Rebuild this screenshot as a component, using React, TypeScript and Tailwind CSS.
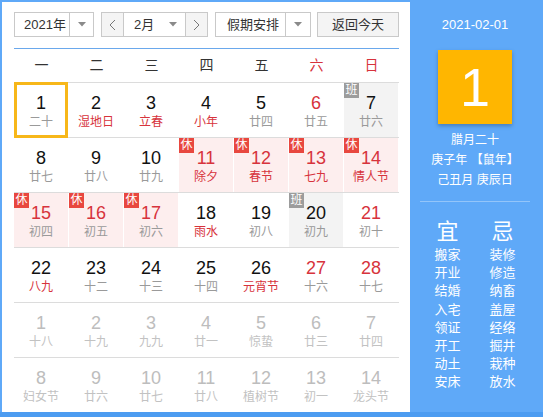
import React from "react";

type Day = {
  d: number;
  l: string;
  red?: boolean;
  lred?: boolean;
  tag?: "休" | "班";
  other?: boolean;
  today?: boolean;
};

const rows: Day[][] = [
  [
    { d: 1, l: "二十", today: true },
    { d: 2, l: "湿地日", lred: true },
    { d: 3, l: "立春", lred: true },
    { d: 4, l: "小年", lred: true },
    { d: 5, l: "廿四" },
    { d: 6, l: "廿五", red: true },
    { d: 7, l: "廿六", tag: "班" },
  ],
  [
    { d: 8, l: "廿七" },
    { d: 9, l: "廿八" },
    { d: 10, l: "廿九" },
    { d: 11, l: "除夕", red: true, lred: true, tag: "休" },
    { d: 12, l: "春节", red: true, lred: true, tag: "休" },
    { d: 13, l: "七九", red: true, lred: true, tag: "休" },
    { d: 14, l: "情人节", red: true, lred: true, tag: "休" },
  ],
  [
    { d: 15, l: "初四", red: true, tag: "休" },
    { d: 16, l: "初五", red: true, tag: "休" },
    { d: 17, l: "初六", red: true, tag: "休" },
    { d: 18, l: "雨水", lred: true },
    { d: 19, l: "初八" },
    { d: 20, l: "初九", tag: "班" },
    { d: 21, l: "初十", red: true },
  ],
  [
    { d: 22, l: "八九", lred: true },
    { d: 23, l: "十二" },
    { d: 24, l: "十三" },
    { d: 25, l: "十四" },
    { d: 26, l: "元宵节", lred: true },
    { d: 27, l: "十六", red: true },
    { d: 28, l: "十七", red: true },
  ],
  [
    { d: 1, l: "十八", other: true },
    { d: 2, l: "十九", other: true },
    { d: 3, l: "九九", other: true },
    { d: 4, l: "廿一", other: true },
    { d: 5, l: "惊蛰", other: true },
    { d: 6, l: "廿三", other: true },
    { d: 7, l: "廿四", other: true },
  ],
  [
    { d: 8, l: "妇女节", other: true },
    { d: 9, l: "廿六", other: true },
    { d: 10, l: "廿七", other: true },
    { d: 11, l: "廿八", other: true },
    { d: 12, l: "植树节", other: true },
    { d: 13, l: "初一", other: true },
    { d: 14, l: "龙头节", other: true },
  ],
];

const yi = ["搬家", "开业", "结婚", "入宅", "领证", "开工", "动土", "安床"];
const ji = ["装修", "修造", "纳畜", "盖屋", "经络", "掘井", "栽种", "放水"];

function Caret() {
  return (
    <svg width="8" height="5" viewBox="0 0 8 5">
      <path d="M0 0 L8 0 L4 4.5 Z" fill="#8a8a8a" />
    </svg>
  );
}

function Chevron({ dir }: { dir: "l" | "r" }) {
  return (
    <svg width="7" height="12" viewBox="0 0 7 12">
      <polyline
        points={dir === "l" ? "6,1 1,6 6,11" : "1,1 6,6 1,11"}
        fill="none"
        stroke="#777"
        strokeWidth="1"
      />
    </svg>
  );
}

function Cell({ day }: { day: Day }) {
  const bg =
    day.tag === "休" ? "bg-[#fdeeee]" : day.tag === "班" ? "bg-[#f3f3f3]" : "bg-white";
  const num = day.other ? "text-[#bdbdbd]" : day.red ? "text-[#d7333c]" : "text-[#111]";
  const lun = day.other ? "text-[#c2c2c2]" : day.lred ? "text-[#d7333c]" : "text-[#9a9a9a]";
  return (
    <div className={`relative flex h-[54px] flex-col items-center border-r border-white pt-[10px] ${bg}`}>
      {day.tag && (
        <span
          className={`absolute left-0 top-0 h-[15px] w-[15px] text-center text-[12px] leading-[15px] text-white ${
            day.tag === "休" ? "bg-[#e8473f]" : "bg-[#9c9c9c]"
          }`}
        >
          {day.tag}
        </span>
      )}
      <span className={`text-[18px] leading-[20px] ${num}`}>{day.d}</span>
      <span className={`mt-[1px] text-[12px] leading-[16px] ${lun}`}>{day.l}</span>
      {day.today && (
        <span className="absolute -bottom-[1px] -top-[1px] left-0 right-0 z-10 border-[3px] border-[#f7b719]" />
      )}
    </div>
  );
}

export default function App() {
  return (
    <div className="flex h-[417px] w-[543px] border-b-[5px] border-[#4c9cf1] bg-[#5fa9f8] pl-[2px] pt-[2px] font-[Liberation_Sans,Noto_Sans_CJK_SC,sans-serif]">
      {/* calendar */}
      <div className="flex h-[410px] w-[408px] flex-col bg-white pl-[12px] pr-[11px] pt-[10px]">
        <div className="flex h-[25px] text-[13px] text-[#333]">
          <div className="flex w-[80px] border border-[#c9c9c9]">
            <span className="flex-1 pl-[9px] leading-[23px]">2021年</span>
            <span className="flex w-[24px] items-center justify-center border-l border-[#c9c9c9]">
              <Caret />
            </span>
          </div>
          <div className="ml-[7px] flex w-[107px] border border-[#c9c9c9]">
            <span className="flex w-[22px] items-center justify-center border-r border-[#c9c9c9] bg-[#f4f4f4]">
              <Chevron dir="l" />
            </span>
            <span className="flex flex-1 items-center pl-[10px] pr-[8px]">
              <span className="flex-1 leading-[23px]">2月</span>
              <Caret />
            </span>
            <span className="flex w-[22px] items-center justify-center border-l border-[#c9c9c9] bg-[#f4f4f4]">
              <Chevron dir="r" />
            </span>
          </div>
          <div className="ml-[7px] flex w-[96px] border border-[#c9c9c9]">
            <span className="flex-1 pl-[11px] leading-[23px]">假期安排</span>
            <span className="flex w-[25px] items-center justify-center border-l border-[#c9c9c9]">
              <Caret />
            </span>
          </div>
          <div className="ml-[6px] flex w-[82px] items-center justify-center border border-[#c9c9c9] bg-[#f4f4f4] leading-[23px]">
            返回今天
          </div>
        </div>
        <div className="mt-[11px] h-px bg-[#6aa8ec]" />
        <div className="grid h-[33px] grid-cols-7 items-center text-center text-[14px] text-[#333]">
          <span>一</span>
          <span>二</span>
          <span>三</span>
          <span>四</span>
          <span>五</span>
          <span className="text-[#d7333c]">六</span>
          <span className="text-[#d7333c]">日</span>
        </div>
        {rows.map((row, i) => (
          <div key={i} className="grid grid-cols-7 border-t border-[#dcdcdc]">
            {row.map((day, j) => (
              <Cell key={j} day={day} />
            ))}
          </div>
        ))}
      </div>

      {/* side panel */}
      <div className="flex flex-1 flex-col items-center pr-[3px] pt-[13px] text-white">
        <div className="text-[13px] leading-[20px]">2021-02-01</div>
        <div className="mt-[15px] flex h-[74px] w-[74px] items-center justify-center bg-[#ffb600] text-[54px] leading-none shadow-[0_2px_4px_rgba(0,0,0,0.25)]">
          1
        </div>
        <div className="mt-[6px] text-center text-[12px] leading-[20px]">
          <div>腊月二十</div>
          <div>庚子年 【鼠年】</div>
          <div>己丑月 庚辰日</div>
        </div>
        <div className="mt-[11px] h-px w-[110px] bg-[#93c5fa]" />
        <div className="mt-[16px] grid w-[110px] grid-cols-2 text-center">
          <div className="text-[22px] leading-[28px]">宜</div>
          <div className="text-[22px] leading-[28px]">忌</div>
          <div className="text-[13px] leading-[18.2px]">
            {yi.map((t) => (
              <div key={t}>{t}</div>
            ))}
          </div>
          <div className="text-[13px] leading-[18.2px]">
            {ji.map((t) => (
              <div key={t}>{t}</div>
            ))}
          </div>
        </div>
      </div>
    </div>
  );
}
